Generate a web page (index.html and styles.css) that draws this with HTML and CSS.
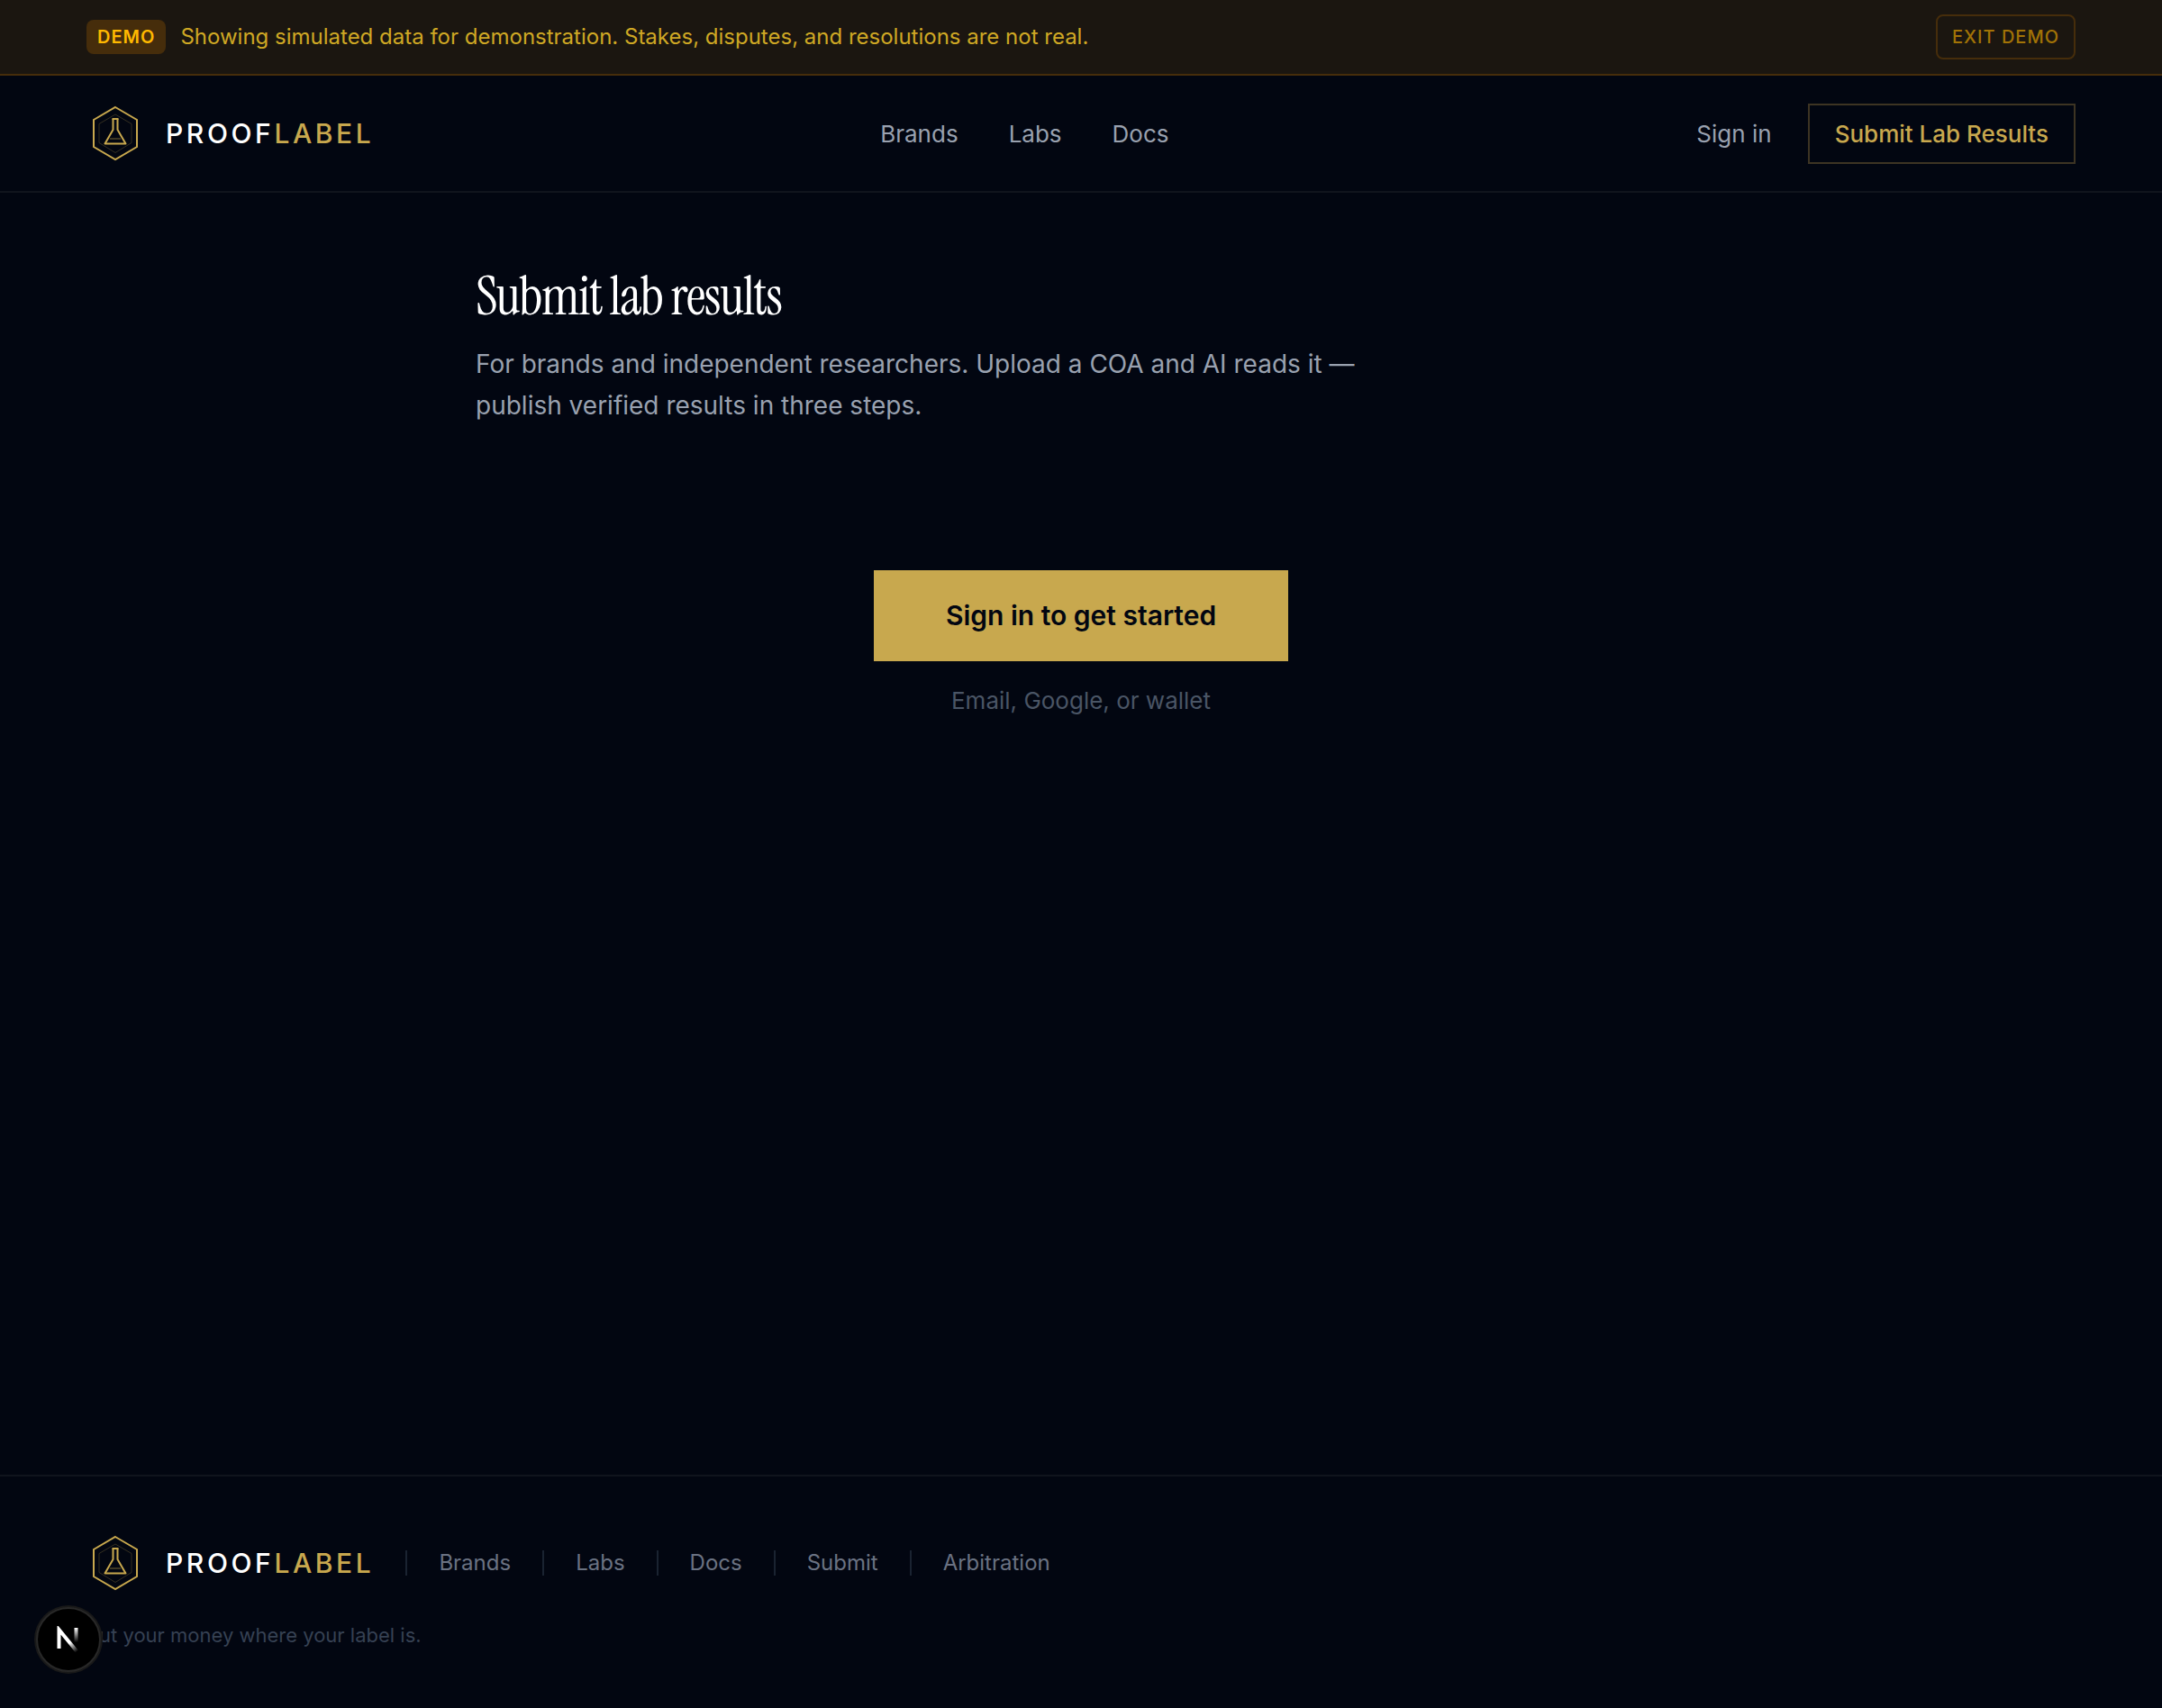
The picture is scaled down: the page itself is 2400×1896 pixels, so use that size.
FILE: index.html
```html
<!DOCTYPE html>
<html lang="en">
<head>
  <meta charset="UTF-8">
  <meta name="viewport" content="width=device-width, initial-scale=1">
  <title>Submit lab results</title>
  <link rel="stylesheet" href="styles.css">
</head>
<body>

<svg class="defs" width="0" height="0" aria-hidden="true">
  <symbol id="mark" viewBox="0 0 64 64">
    <g fill="none" stroke="currentColor">
      <path d="M32 3 L56 17 V47 L32 61 L8 47 V17 Z" stroke-width="2"/>
      <path d="M32 11 L50 21.500 V42.500 L32 53.500 L14 42.500 V21.500 Z" stroke-width="1" opacity=".25"/>
      <path d="M28.500 16 H35.500" stroke-width="2"/>
      <path d="M29.500 16 V28 L20.500 43.500 H43.500 L34.500 28 V16" stroke-width="2" stroke-linejoin="round"/>
      <path d="M26 38 H38" stroke-width="2" opacity=".3"/>
    </g>
  </symbol>
</svg>

<div class="banner">
  <span class="badge">DEMO</span>
  <p class="banner-text">Showing simulated data for demonstration. Stakes, disputes, and resolutions are not real.</p>
  <button class="exit" type="button">EXIT DEMO</button>
</div>

<header class="header">
  <a class="logo" href="#">
    <svg class="logo-mark" aria-hidden="true"><use href="#mark"/></svg>
    <span class="logo-text">PROOF<span class="gold">LABEL</span></span>
  </a>
  <nav class="nav">
    <a href="#">Brands</a>
    <a href="#">Labs</a>
    <a href="#">Docs</a>
  </nav>
  <div class="actions">
    <button class="signin" type="button">Sign in</button>
    <a class="submit" href="#">Submit Lab Results</a>
  </div>
</header>

<main class="main">
  <h1 class="title">Submit lab results</h1>
  <p class="intro">For brands and independent researchers. Upload a COA and AI reads it — publish verified results in three steps.</p>
  <div class="start">
    <button class="start-btn" type="button">Sign in to get started</button>
    <p class="start-note">Email, Google, or wallet</p>
  </div>
</main>

<footer class="footer">
  <div class="footer-row">
    <a class="logo" href="#">
      <svg class="logo-mark" aria-hidden="true"><use href="#mark"/></svg>
      <span class="logo-text">PROOF<span class="gold">LABEL</span></span>
    </a>
    <nav class="footer-nav">
      <a href="#">Brands</a>
      <a href="#">Labs</a>
      <a href="#">Docs</a>
      <a href="#">Submit</a>
      <a href="#">Arbitration</a>
    </nav>
  </div>
  <p class="tagline">Put your money where your label is.</p>
</footer>

<button class="devtools" type="button" aria-label="Open dev tools">
  <svg class="devtools-icon" viewBox="0 0 28 30" fill="none" aria-hidden="true">
    <defs>
      <linearGradient id="diag" gradientUnits="userSpaceOnUse" x1="16" y1="18" x2="24" y2="28">
        <stop stop-color="#fff"/>
        <stop offset="1" stop-color="#fff" stop-opacity="0"/>
      </linearGradient>
      <linearGradient id="stem" gradientUnits="userSpaceOnUse" x1="22" y1="2" x2="22" y2="18">
        <stop stop-color="#fff"/>
        <stop offset="1" stop-color="#fff" stop-opacity="0"/>
      </linearGradient>
    </defs>
    <path d="M3.500 25 V4 L24 29" stroke="url(#diag)" stroke-width="4"/>
    <path d="M22.500 2 V18" stroke="url(#stem)" stroke-width="4"/>
  </svg>
</button>

</body>
</html>
```

FILE: styles.css
```css
* {
  box-sizing: border-box;
}
body {
  margin: 0;
  min-height: 100vh;
  display: flex;
  flex-direction: column;
  background: #020611;
  color: #99a1af;
  font-family: Inter, "Liberation Sans", sans-serif;
  font-size: 26px;
}
p, h1 {
  margin: 0;
}
a {
  color: inherit;
  text-decoration: none;
}
button {
  font: inherit;
  color: inherit;
  background: none;
  border: 0;
  padding: 0;
  cursor: pointer;
}
.defs {
  position: absolute;
}

/* demo banner */
.banner {
  display: flex;
  align-items: center;
  gap: 16px;
  padding: 16px 96px;
  background: #1b1610;
  border-bottom: 2px solid #462d0b;
}
.badge {
  padding: 4px 12px;
  border-radius: 8px;
  background: #462d0b;
  color: #ffb900;
  font-size: 20px;
  font-weight: 600;
  line-height: 30px;
  letter-spacing: 1px;
}
.banner-text {
  flex: 1;
  color: #cfa824;
  font-size: 24px;
  line-height: 36px;
}
.exit {
  padding: 8px 16px;
  border: 2px solid #462d0b;
  border-radius: 8px;
  color: #a27306;
  font-size: 20px;
  font-weight: 500;
  line-height: 30px;
  letter-spacing: 1px;
}

/* header */
.header {
  display: flex;
  align-items: center;
  justify-content: space-between;
  height: 130px;
  padding: 0 96px;
  border-bottom: 2px solid #10141d;
}
.logo {
  display: flex;
  align-items: center;
  gap: 24px;
}
.logo-mark {
  width: 64px;
  height: 64px;
  color: #c8a84e;
}
.logo-text {
  color: #fff;
  font-size: 30px;
  font-weight: 500;
  letter-spacing: 0.12em;
}
.gold {
  color: #c8a84e;
}
.nav {
  display: flex;
  gap: 56px;
}
.actions {
  display: flex;
  align-items: center;
  gap: 16px;
}
.signin {
  padding: 12px 24px;
}
.submit {
  padding: 12px 28px;
  border: 2px solid #3d3423;
  color: #c8a84e;
  font-weight: 500;
  line-height: 39px;
}

/* page */
.main {
  flex: 1;
  width: 100%;
  max-width: 1344px;
  margin: 0 auto;
  padding-top: 80px;
}
.title {
  color: #fff;
  font-family: "Instrument Serif", "Liberation Serif", serif;
  font-size: 60px;
  font-weight: 400;
  line-height: 71px;
  letter-spacing: -0.025em;
}
.intro {
  max-width: 1024px;
  margin-top: 16px;
  font-size: 28px;
  line-height: 46px;
}
.start {
  display: flex;
  flex-direction: column;
  align-items: center;
  gap: 24px;
  padding-top: 160px;
}
.start-btn {
  padding: 28px 80px;
  background: #c8a84e;
  color: #020611;
  font-size: 30px;
  font-weight: 600;
  line-height: 45px;
}
.start-note {
  color: #4a5565;
  line-height: 40px;
}

/* footer */
.footer {
  padding: 64px 96px;
  border-top: 2px solid #10141d;
}
.footer-row {
  display: flex;
  align-items: center;
  gap: 35px;
}
.footer-nav {
  display: flex;
  gap: 35px;
  color: #6a7282;
  font-size: 24px;
  line-height: 28px;
}
.footer-nav a {
  padding-left: 35px;
  border-left: 2px solid #1a2331;
}
.tagline {
  margin-top: 32px;
  color: #364153;
  font-size: 22px;
  line-height: 33px;
}

.devtools {
  position: fixed;
  left: 40px;
  bottom: 40px;
  display: grid;
  place-items: center;
  width: 72px;
  height: 72px;
  border: 2px solid #282828;
  border-radius: 50%;
  background: #000;
  box-shadow: 0 0 0 2px #191919;
}
.devtools-icon {
  width: 28px;
  height: 30px;
}
```
